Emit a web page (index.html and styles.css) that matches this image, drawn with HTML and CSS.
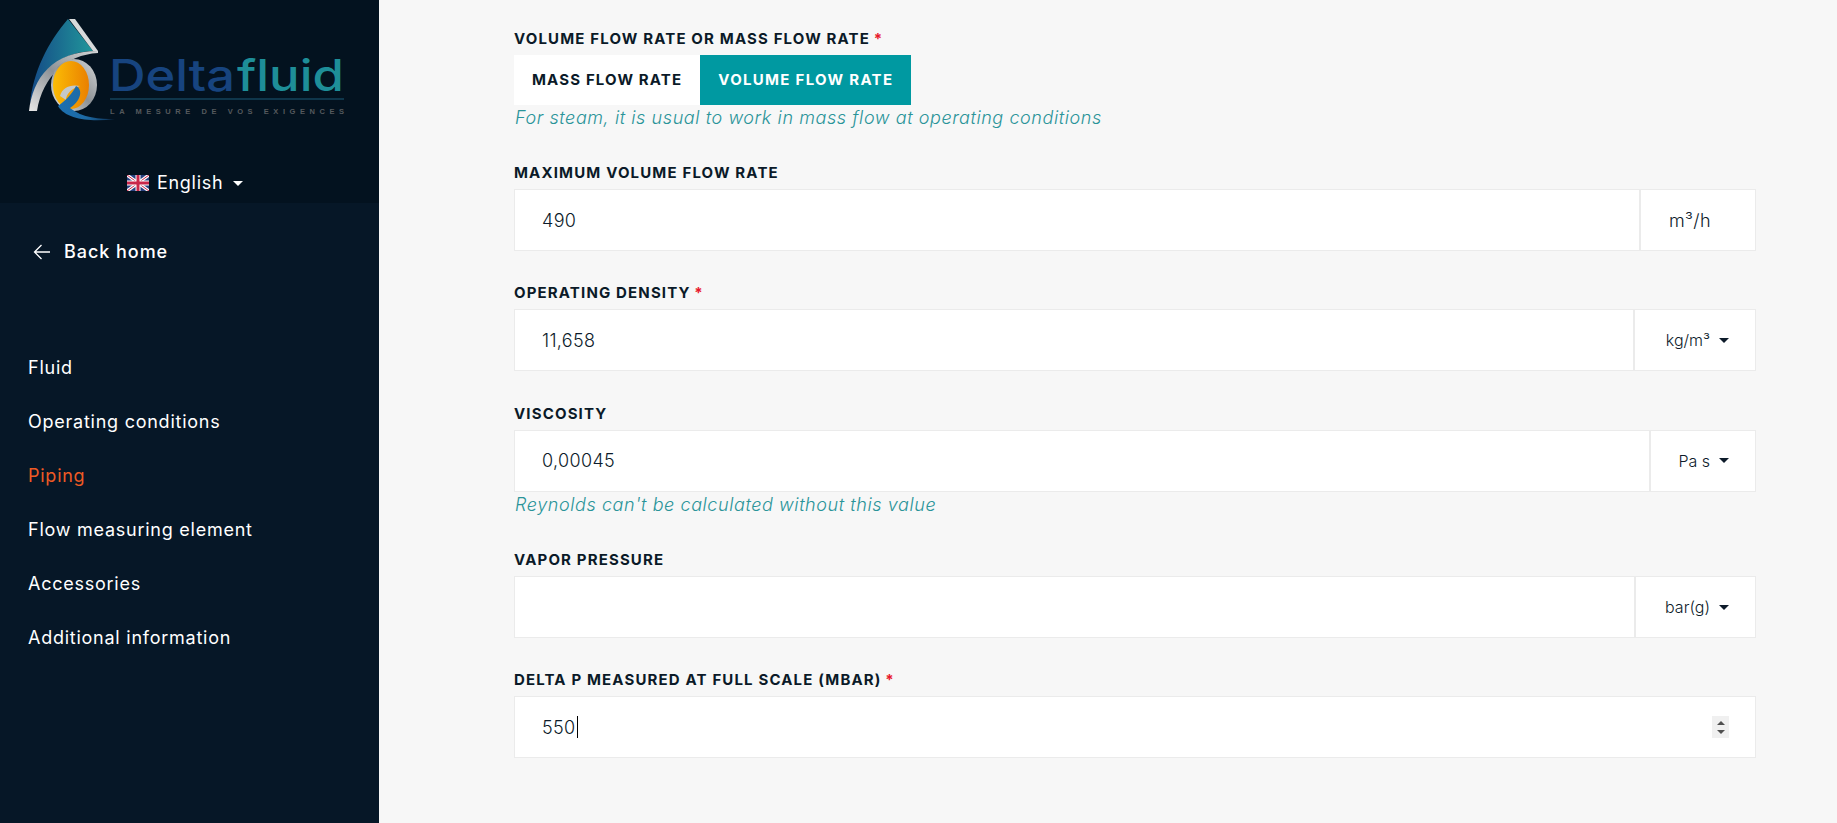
FILE: index.html
```html
<!DOCTYPE html>
<html lang="en">
<head>
<meta charset="utf-8">
<title>Deltafluid</title>
<link rel="stylesheet" href="styles.css">
</head>
<body>
<div class="app">
  <aside class="sidebar">
    <header class="brand">
      <svg class="logo" width="379" height="128" viewBox="0 0 379 128">
        <defs>
          <linearGradient id="sail" x1="0" y1="0" x2="1" y2="0">
            <stop offset="0" stop-color="#154a86"/>
            <stop offset="1" stop-color="#21979b"/>
          </linearGradient>
          <linearGradient id="gold" x1="0" y1="0" x2="1" y2="0">
            <stop offset="0" stop-color="#fbbc05"/>
            <stop offset="1" stop-color="#ea8000"/>
          </linearGradient>
          <linearGradient id="silver" x1="0" y1="1" x2="1" y2="0">
            <stop offset="0" stop-color="#e8e8e8"/>
            <stop offset=".5" stop-color="#8d9296"/>
            <stop offset="1" stop-color="#d5d7d8"/>
          </linearGradient>
          <linearGradient id="swoosh" x1="0" y1="0" x2="1" y2="0">
            <stop offset="0" stop-color="#1c6fb0"/>
            <stop offset=".5" stop-color="#1d6aa5"/>
            <stop offset="1" stop-color="#0c2a4a"/>
          </linearGradient>
        </defs>
        <path d="M68 19 L93 51 C60 52 38 72 30 104 C33 72 48 42 68 19 Z" fill="url(#sail)"/>
        <path d="M69 19 L75 19 L98 51 L93 51 Z" fill="#d8dadb"/>
        <path d="M29 111 C33 78 52 51 98 51 L98 53 C66 55 43 76 37 111 Z" fill="url(#silver)"/>
        <ellipse cx="74" cy="85" rx="23" ry="26" fill="url(#silver)"/>
        <ellipse cx="71" cy="85" rx="18" ry="24" fill="url(#gold)"/>
        <path d="M60 96 C62 88 70 84 80 86 C72 88 66 94 66 100 Z" fill="#c4c8ca"/>
        <path d="M58 106 C66 100 72 94 76 86 C84 90 80 102 70 108 C82 118 100 119 115 119 C92 122 66 120 58 106 Z" fill="url(#swoosh)"/>
        <text class="logo-word logo-delta" x="109" y="91" textLength="126" lengthAdjust="spacingAndGlyphs">Delta</text>
        <text class="logo-word logo-fluid" x="237" y="91" textLength="107" lengthAdjust="spacingAndGlyphs">fluid</text>
        <rect x="110" y="98.5" width="234" height="1" fill="#1d5a78"/>
        <text class="logo-tag" x="110" y="114" textLength="234">LA MESURE DE VOS EXIGENCES</text>
      </svg>
      <div class="lang">
        <svg class="flag" width="22" height="16" viewBox="0 0 22 16">
          <rect width="22" height="16" rx="1.5" fill="#27407f"/>
          <path d="M0 0 L22 16 M22 0 L0 16" stroke="#fff" stroke-width="3.2"/>
          <path d="M0 0 L22 16 M22 0 L0 16" stroke="#c9264a" stroke-width="1"/>
          <path d="M11 0 V16 M0 8 H22" stroke="#fff" stroke-width="5"/>
          <path d="M11 0 V16 M0 8 H22" stroke="#c9264a" stroke-width="3"/>
        </svg>
        <span>English</span>
        <i class="caret caret-white"></i>
      </div>
    </header>
    <nav class="nav">
      <a class="back">
        <svg width="18" height="16" viewBox="0 0 18 16"><path d="M8.5 1 L1.5 8 L8.5 15 M1.5 8 H17" fill="none" stroke="#fff" stroke-width="1.3"/></svg>
        <span>Back home</span>
      </a>
      <ul class="steps">
        <li>Fluid</li>
        <li>Operating conditions</li>
        <li class="active">Piping</li>
        <li>Flow measuring element</li>
        <li>Accessories</li>
        <li>Additional information</li>
      </ul>
    </nav>
  </aside>
  <main class="main">
    <section class="group">
      <label class="label l1">Volume flow rate or mass flow rate <b>*</b></label>
      <div class="toggle">
        <span class="tbtn">Mass flow rate</span>
        <span class="tbtn on">Volume flow rate</span>
      </div>
      <p class="hint">For steam, it is usual to work in mass flow at operating conditions</p>
    </section>
    <section class="group">
      <label class="label">Maximum volume flow rate</label>
      <div class="field">
        <div class="input">490</div>
        <div class="unit unit-m">m³/h</div>
      </div>
    </section>
    <section class="group">
      <label class="label">Operating density <b>*</b></label>
      <div class="field">
        <div class="input">11,658</div>
        <div class="unit unit-kg"><span>kg/m³</span><i class="caret"></i></div>
      </div>
    </section>
    <section class="group">
      <label class="label">Viscosity</label>
      <div class="field">
        <div class="input">0,00045</div>
        <div class="unit unit-pa"><span>Pa s</span><i class="caret"></i></div>
      </div>
      <p class="hint hint-field">Reynolds can't be calculated without this value</p>
    </section>
    <section class="group">
      <label class="label">Vapor pressure</label>
      <div class="field">
        <div class="input"></div>
        <div class="unit unit-bar"><span>bar(g)</span><i class="caret"></i></div>
      </div>
    </section>
    <section class="group">
      <label class="label">Delta P measured at full scale (mbar) <b>*</b></label>
      <div class="field">
        <div class="input with-spin">
          <span>550</span><i class="cursor"></i>
          <span class="spin"><i class="up"></i><i class="down"></i></span>
        </div>
      </div>
    </section>
  </main>
</div>
</body>
</html>
```
FILE: styles.css
```css
* { box-sizing: border-box; }
html, body { margin: 0; height: 100%; overflow: hidden; }
body { font-family: Inter, "Noto Sans", "Liberation Sans", sans-serif; background: #f7f7f7; color: #0d1b2a; }
.app { display: flex; height: 823px; }

/* Sidebar */
.sidebar { width: 379px; flex: none; background: #061727; color: #fff; }
.brand { height: 203px; background: #03121f; display: flex; flex-direction: column; }
.logo { display: block; flex: none; }
.logo-word { font-family: Inter, sans-serif; font-weight: 500; font-size: 44px; }
.logo-delta { fill: #17447f; }
.logo-fluid { fill: #1e8e98; }
.logo-tag { font-family: "Liberation Sans", sans-serif; font-weight: 700; font-size: 7.5px; fill: #55595d; }
.lang { display: flex; align-items: center; padding: 40px 0 0 127px; font-size: 18px; line-height: 30px; letter-spacing: .7px; }
.flag { margin-right: 8px; }
.lang .caret { margin-left: 10px; }
.caret { display: inline-block; width: 0; height: 0; border-left: 5px solid transparent; border-right: 5px solid transparent; border-top: 5px solid #0d1b2a; }
.caret-white { border-top-color: #fff; }
.nav { padding: 34px 0 0 28px; }
.back { display: flex; align-items: center; gap: 13px; font-size: 18px; font-weight: 500; line-height: 30px; letter-spacing: .95px; padding-left: 5px; }
.steps { list-style: none; margin: 74px 0 0; padding: 0; font-size: 18px; letter-spacing: .75px; }
.steps li { height: 54px; line-height: 54px; }
.steps .active { color: #ee5a24; }

/* Main form */
.main { flex: 1; padding: 27.7px 81px 0 135px; }
.group { margin-bottom: 32.33px; }
.label { display: block; height: 20px; line-height: 20px; margin-bottom: 6px; font-size: 15px; font-weight: 700; text-transform: uppercase; letter-spacing: 1.15px; color: #0b1a28; }
.label b { color: #e8192c; font-weight: 700; letter-spacing: 0; margin-left: -1px; }
.l1 { height: 22px; line-height: 22px; margin-bottom: 5px; }
.toggle { display: flex; height: 50px; }
.tbtn { display: flex; align-items: center; padding: 0 18px; background: #fff; font-size: 15px; font-weight: 700; text-transform: uppercase; letter-spacing: 1.15px; color: #0b1a28; }
.tbtn.on { background: #0099a1; color: #fff; letter-spacing: 1.3px; }
.hint { margin: 0 0 0 1px; font-size: 18px; line-height: 26px; font-style: italic; color: #2a9499; letter-spacing: .58px; font-weight: 300; }
.hint-field { margin-bottom: 1px; }
.field { display: flex; height: 62px; }
.input { flex: 1; display: flex; align-items: center; background: #fff; border: 1px solid #ebebeb; padding-left: 27px; font-size: 18px; letter-spacing: .35px; color: #0d1b2a; font-weight: 300; }
.unit { flex: none; display: flex; align-items: center; justify-content: flex-end; padding-right: 26px; background: #fff; border: 1px solid #ebebeb; font-size: 16px; font-weight: 300; gap: 9px; }
.unit-m { width: 116px; justify-content: flex-start; padding: 0 0 0 28px; font-size: 18px; letter-spacing: .4px; }
.unit-kg { width: 122px; }
.unit-pa { width: 106px; }
.unit-bar { width: 121px; }
.cursor { width: 1px; height: 22px; background: #000; margin-left: 1px; }
.with-spin { position: relative; }
.spin { position: absolute; right: 26px; top: 19px; width: 17px; height: 22px; background: #f0f0f0; display: flex; flex-direction: column; align-items: center; justify-content: center; gap: 5px; }
.spin i { width: 0; height: 0; border-left: 4px solid transparent; border-right: 4px solid transparent; }
.spin .up { border-bottom: 4px solid #505050; }
.spin .down { border-top: 4px solid #505050; }
```
